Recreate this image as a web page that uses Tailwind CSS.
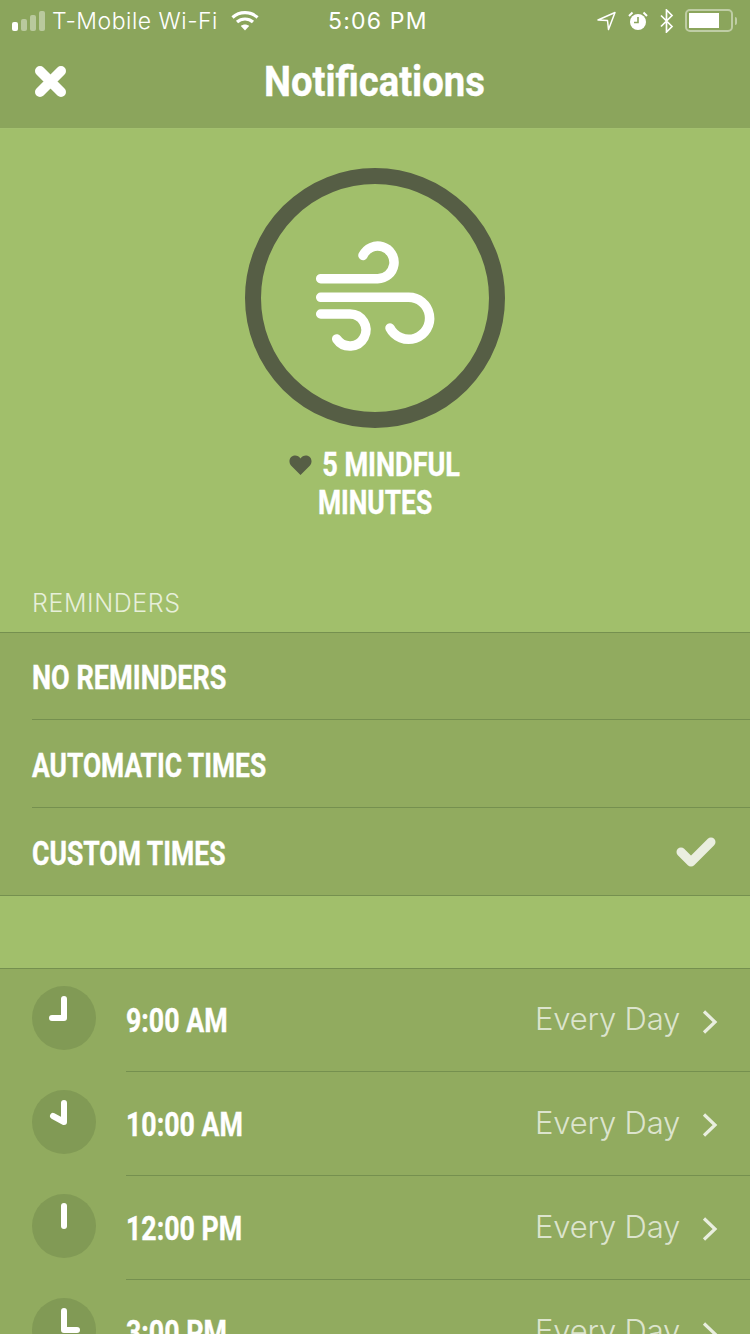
<!DOCTYPE html>
<html lang="en">
<head>
<meta charset="utf-8">
<title>Notifications</title>
<script src="https://cdn.jsdelivr.net/npm/@tailwindcss/browser@4"></script>
</head>
<body class="m-0">
<div class="w-[750px] h-[1334px] overflow-hidden bg-[#a1bf6b] text-white font-['Roboto',sans-serif]">

  <!-- status bar and navigation -->
  <header class="h-[129px] bg-[#8ba55c] border-b border-[#a3c06f] flex flex-col">
    <div class="h-[41px] pt-[1px] relative flex items-center font-['Inter',sans-serif] text-[23px] font-light">
      <div class="flex items-end gap-[3px] pl-[12px] w-[52px] h-[20px]">
        <span class="w-[6px] h-[9px] bg-white rounded-[2px]"></span>
        <span class="w-[6px] h-[12px] bg-white/40 rounded-[2px]"></span>
        <span class="w-[6px] h-[16px] bg-white/40 rounded-[2px]"></span>
        <span class="w-[6px] h-[20px] bg-white/40 rounded-[2px]"></span>
      </div>
      <span class="tracking-[0.5px]">T-Mobile Wi-Fi</span>
      <svg class="ml-[13px] -mt-[2px]" width="28" height="21" viewBox="0 0 28 21" fill="none" stroke="#fff" stroke-width="3.2"><path d="M1.500 7.500c7-6.400 18-6.400 25 0"/><path d="M6 12c4.500-4 11.500-4 16 0"/><path d="M14 20.500l-4.200-4.600c2.400-2 6-2 8.400 0z" fill="#fff" stroke="none"/></svg>
      <span class="absolute left-[328px] tracking-[1.200px] font-normal">5:06 PM</span>
      <div class="absolute left-[597px] top-0 h-[41px] flex items-center">
        <svg width="19" height="20" viewBox="0 0 19 20" fill="none" stroke="#fff" stroke-width="1.500" stroke-linejoin="round"><path d="M1 9L18 1.500L11.500 18.500L10.500 9.500Z"/></svg>
        <svg class="ml-[12px]" width="20" height="20" viewBox="0 0 20 20"><circle cx="10" cy="11" r="8" fill="#fff"/><path d="M10 6v5.500H6" fill="none" stroke="#8ba55c" stroke-width="1.600"/><path d="M1 5l3.500-3.500M19 5l-3.500-3.500" stroke="#fff" stroke-width="2"/></svg>
        <svg class="ml-[11px]" width="15" height="24" viewBox="0 0 15 24" fill="none" stroke="#fff" stroke-width="1.700"><path d="M2 6.500l11 11L7.500 23V1l5.500 5.500L2 17.500"/></svg>
        <div class="ml-[11px] w-[48px] h-[23px] rounded-[5px] border-2 border-white/45 p-[2px]"><div class="w-[30px] h-full bg-white"></div></div>
        <span class="ml-[2px] w-[2px] h-[8px] bg-white/45 rounded-r-[2px]"></span>
      </div>
    </div>
    <div class="flex-1 relative flex items-center justify-center pb-[5px] pr-[2px]">
      <svg class="absolute left-[34px] top-[24px]" width="33" height="33" viewBox="0 0 33 33" fill="none" stroke="#fff" stroke-width="10" stroke-linecap="round" stroke-linejoin="round"><path d="M6 6L27 27M27 6L6 27"/></svg>
      <h1 class="text-[42px] leading-none font-bold scale-x-[0.91] [-webkit-text-stroke:0.4px_#fff]">Notifications</h1>
    </div>
  </header>

  <!-- activity ring and goal -->
  <section class="h-[503px] flex flex-col items-center relative">
    <div class="mt-[39px] w-[260px] h-[260px] rounded-full border-[16px] border-[#565e45] shrink-0"></div>
    <svg class="absolute left-0 top-0" width="750" height="503" viewBox="0 129 750 503" fill="none" stroke="#fff" stroke-width="9.500" stroke-linecap="round"><path d="M320.700 278.700H377.700A16.300 16.300 0 1 0 363 255.400"/><path d="M320.700 297.300H408.300A21 21 0 1 1 390 328"/><path d="M320.700 314H350A16 16 0 1 1 336.700 339"/></svg>
    <div class="mt-[18px] text-[33px] leading-[37px] font-bold text-center [-webkit-text-stroke:0.4px_#fff]">
      <div class="flex items-center justify-center pl-[14px]"><svg class="-mr-[5px]" width="23" height="20" viewBox="0 0 23 20"><path d="M11.500 20L2 10.500C-1 7 .5 1 5.500 .5c2.500-.2 4.700 1 6 3 1.300-2 3.500-3.200 6-3 5 .5 6.500 6.500 3.500 10z" fill="#565e45" stroke="none"/></svg><span class="scale-x-[0.82]">5 MINDFUL</span></div>
      <div class="scale-x-[0.8] translate-y-[1px]">MINUTES</div>
    </div>
    <div class="absolute left-[32px] top-[459px] font-['Inter',sans-serif] font-light text-[25px] tracking-[0.6px] leading-[30px] text-white/75">REMINDERS</div>
  </section>

  <!-- reminder mode -->
  <section class="bg-[#91ab5f] border-y border-[#75904f] text-[33px] font-bold [-webkit-text-stroke:0.4px_#fff]">
    <div class="h-[86px] flex items-center pl-[32px] pt-[4px]"><span class="origin-left scale-x-[0.82]">NO REMINDERS</span></div>
    <div class="ml-[32px] h-[88px] flex items-center border-t border-[#75904f] pt-[5px]"><span class="origin-left scale-x-[0.8]">AUTOMATIC TIMES</span></div>
    <div class="ml-[32px] h-[88px] flex items-center justify-between border-t border-[#75904f] pr-[34px] pt-[1px]"><span class="origin-left scale-x-[0.805] mt-[4px]">CUSTOM TIMES</span>
      <svg width="40" height="30" viewBox="0 0 40 30" fill="none" stroke="#eaeee0" stroke-width="9" stroke-linecap="round" stroke-linejoin="round"><path d="M5 15l10 10L35 5"/></svg>
    </div>
  </section>

  <!-- scheduled times -->
  <section class="mt-[72px] bg-[#91ab5f] border-t border-[#75904f] text-[33px] font-bold h-[400px]">
    <div class="h-[103px] flex pl-[32px]">
      <svg class="mt-[17px] shrink-0" width="64" height="64" viewBox="0 0 64 64" fill="none" stroke="#fff" stroke-width="6" stroke-linecap="round" stroke-linejoin="round"><circle cx="32" cy="32" r="32" fill="#819a55" stroke="none"/><path d="M32 13V32H20"/></svg>
      <div class="ml-[30px] flex-1 flex items-center justify-between border-b border-[#75904f] pr-[32px]"><span class="origin-left scale-x-[0.81] mt-[2px] [-webkit-text-stroke:0.4px_#fff]">9:00 AM</span>
        <span class="flex items-center font-['Inter',sans-serif] font-light text-[31px] tracking-[-0.2px] text-white/70 -mt-[1px]">Every Day<svg class="ml-[22px] mt-[4px]" width="16" height="26" viewBox="0 0 16 26" fill="none" stroke="#fff" stroke-opacity="0.8" stroke-width="3.200"><path d="M2 2.500L13 13L2 23.500"/></svg></span>
      </div>
    </div>
    <div class="h-[104px] flex pl-[32px]">
      <svg class="mt-[18px] shrink-0" width="64" height="64" viewBox="0 0 64 64" fill="none" stroke="#fff" stroke-width="6" stroke-linecap="round" stroke-linejoin="round"><circle cx="32" cy="32" r="32" fill="#819a55" stroke="none"/><path d="M32 13V32L21 26"/></svg>
      <div class="ml-[30px] flex-1 flex items-center justify-between border-b border-[#75904f] pr-[32px]"><span class="origin-left scale-x-[0.81] mt-[2px] [-webkit-text-stroke:0.4px_#fff]">10:00 AM</span>
        <span class="flex items-center font-['Inter',sans-serif] font-light text-[31px] tracking-[-0.2px] text-white/70 -mt-[1px]">Every Day<svg class="ml-[22px] mt-[4px]" width="16" height="26" viewBox="0 0 16 26" fill="none" stroke="#fff" stroke-opacity="0.8" stroke-width="3.200"><path d="M2 2.500L13 13L2 23.500"/></svg></span>
      </div>
    </div>
    <div class="h-[104px] flex pl-[32px]">
      <svg class="mt-[18px] shrink-0" width="64" height="64" viewBox="0 0 64 64" fill="none" stroke="#fff" stroke-width="6" stroke-linecap="round" stroke-linejoin="round"><circle cx="32" cy="32" r="32" fill="#819a55" stroke="none"/><path d="M32 12V32"/></svg>
      <div class="ml-[30px] flex-1 flex items-center justify-between border-b border-[#75904f] pr-[32px]"><span class="origin-left scale-x-[0.81] mt-[2px] [-webkit-text-stroke:0.4px_#fff]">12:00 PM</span>
        <span class="flex items-center font-['Inter',sans-serif] font-light text-[31px] tracking-[-0.2px] text-white/70 -mt-[1px]">Every Day<svg class="ml-[22px] mt-[4px]" width="16" height="26" viewBox="0 0 16 26" fill="none" stroke="#fff" stroke-opacity="0.8" stroke-width="3.200"><path d="M2 2.500L13 13L2 23.500"/></svg></span>
      </div>
    </div>
    <div class="h-[104px] flex pl-[32px]">
      <svg class="mt-[18px] shrink-0" width="64" height="64" viewBox="0 0 64 64" fill="none" stroke="#fff" stroke-width="6" stroke-linecap="round" stroke-linejoin="round"><circle cx="32" cy="32" r="32" fill="#819a55" stroke="none"/><path d="M32 13V32H45"/></svg>
      <div class="ml-[30px] flex-1 flex items-center justify-between pr-[32px]"><span class="origin-left scale-x-[0.81] mt-[2px] [-webkit-text-stroke:0.4px_#fff]">3:00 PM</span>
        <span class="flex items-center font-['Inter',sans-serif] font-light text-[31px] tracking-[-0.2px] text-white/70 -mt-[1px]">Every Day<svg class="ml-[22px] mt-[4px]" width="16" height="26" viewBox="0 0 16 26" fill="none" stroke="#fff" stroke-opacity="0.8" stroke-width="3.200"><path d="M2 2.500L13 13L2 23.500"/></svg></span>
      </div>
    </div>
  </section>
</div>
</body>
</html>
